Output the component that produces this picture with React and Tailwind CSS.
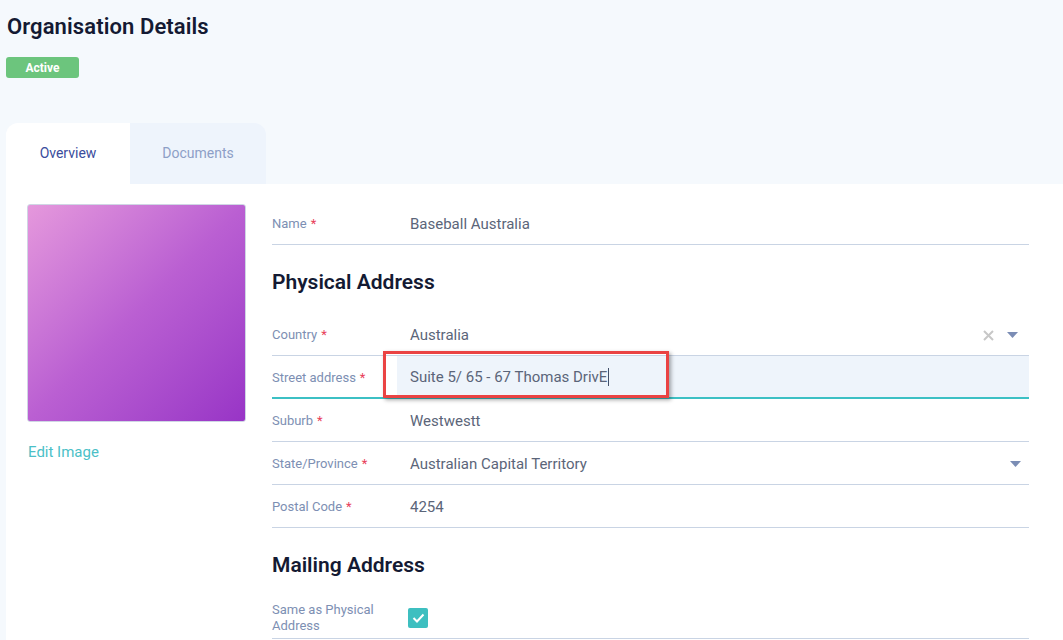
import React from "react";

function Label({ children, multi }) {
  return (
    <div className={`w-[138px] shrink-0 text-[13px] text-[#7d8fb3] ${multi ? "leading-[16px]" : ""}`}>
      {children}
      {!multi && <span className="ml-1 text-[#e8405a]">*</span>}
    </div>
  );
}

function Caret() {
  return (
    <svg width="11" height="6" viewBox="0 0 11 6" className="shrink-0">
      <path d="M0 0h11L5.5 6z" fill="#7b8db5" />
    </svg>
  );
}

function Row({ label, value, right, className = "" }) {
  return (
    <div className={`flex items-center h-[43px] pt-[3px] border-b border-[#c9d4e4] ${className}`}>
      <Label>{label}</Label>
      <div className="flex-1 text-[15px] text-[#5b6579]">{value}</div>
      {right}
    </div>
  );
}

export default function App() {
  return (
    <div className="min-h-[640px] bg-[#f5f9fd] pl-[6px] font-['Roboto',sans-serif] overflow-hidden">
      <div className="pt-[14px] pl-[1px]">
        <h1 className="text-[22px] font-semibold text-[#141a33] tracking-[0.1px] leading-[26px]">
          Organisation Details
        </h1>
        <span className="mt-[17px] inline-flex items-center h-[21px] w-[73px] justify-center -ml-[1px] rounded-[3px] bg-[#6cc57d] text-[12px] font-bold text-white">
          Active
        </span>
      </div>

      <div className="mt-[44px] flex">
        <div className="w-[124px] h-[61px] bg-white rounded-tl-[12px] flex items-center justify-center text-[14px] text-[#3a4c9c]">
          Overview
        </div>
        <div className="w-[136px] h-[61px] bg-[#eef4fc] rounded-tr-[12px] flex items-center justify-center text-[14px] text-[#8d9fc7]">
          Documents
        </div>
      </div>

      <div className="bg-white flex pt-[20px] pb-[20px] h-[456px]">
        <div className="w-[266px] shrink-0 pl-[21px]">
          <div className="w-[219px] h-[218px] rounded-[3px] border border-[#cfd6e4] bg-gradient-to-br from-[#e598dc] via-[#ba5fd2] to-[#9834c6]" />
          <div className="mt-[19px] pl-[1px] text-[15px] text-[#4bbfc7]">Edit Image</div>
        </div>

        <div className="w-[757px] shrink-0">
          <Row label="Name" value="Baseball Australia" className="-mt-[2px]" />
          <h2 className="mt-[24px] mb-[18px] text-[21px] font-semibold text-[#141a33] leading-[26px]">
            Physical Address
          </h2>
          <Row
            label="Country"
            value="Australia"
            className="h-[42px]"
            right={
              <div className="flex items-center gap-[13px] pr-[11px]">
                <svg width="11" height="11" viewBox="0 0 11 11">
                  <path d="M1 1l9 9M10 1l-9 9" stroke="#c7c7c7" strokeWidth="2" />
                </svg>
                <Caret />
              </div>
            }
          />
          <div className="relative flex items-center h-[43px] border-b-2 border-[#3cc0c4]">
            <div className="pt-[3px]">
              <Label>Street address</Label>
            </div>
            <div className="flex-1 h-full bg-[#eef4fb] ml-[-13px] pl-[13px] pt-[2px] flex items-center text-[15px] text-[#5b6579]">
              Suite 5/ 65 - 67 Thomas DrivE
              <span className="ml-[1px] inline-block w-px h-[18px] bg-[#44506a]" />
            </div>
            <div className="absolute left-[111px] top-[-5px] w-[286px] h-[47px] border-[3px] border-[#ea4343] shadow-[2px_2px_4px_rgba(0,0,0,0.35)]" />
          </div>
          <Row label="Suburb" value="Westwestt" />
          <Row label="State/Province" value="Australian Capital Territory" right={<div className="pr-[8px]"><Caret /></div>} />
          <Row label="Postal Code" value="4254" />
          <h2 className="mt-[24px] mb-[21px] text-[21px] font-semibold text-[#141a33] leading-[26px]">
            Mailing Address
          </h2>
          <div className="flex items-center h-[40px] border-b border-[#c9d4e4]">
            <Label multi>
              Same as Physical
              <br />
              Address
            </Label>
            <div className="-ml-[2px] w-[20px] h-[20px] rounded-[2px] bg-[#3dbfc0] flex items-center justify-center">
              <svg width="13" height="10" viewBox="0 0 13 10">
                <path d="M1.5 5l3.5 3.5L11.5 1.5" stroke="white" strokeWidth="2" fill="none" />
              </svg>
            </div>
          </div>
        </div>
      </div>
    </div>
  );
}
